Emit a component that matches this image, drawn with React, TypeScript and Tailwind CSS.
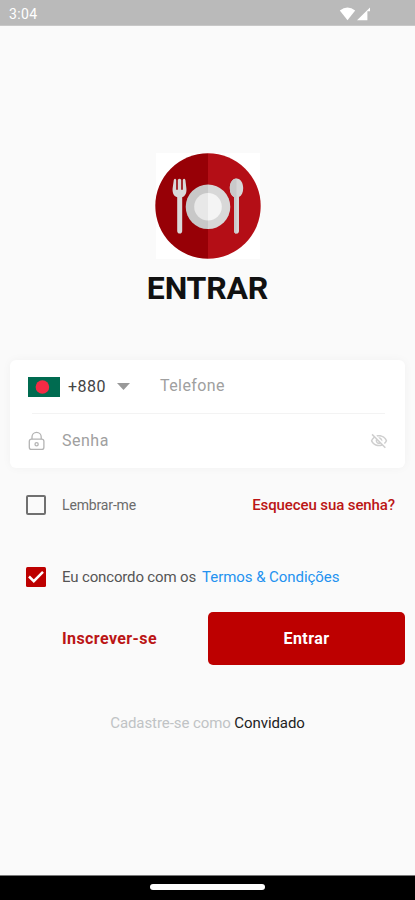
import React from "react";

const App: React.FC = () => {
  return (
    <div className="flex h-[900px] w-[415px] flex-col overflow-hidden bg-[#fafafa] font-[Roboto,sans-serif]">
      <StatusBar />
      <main className="flex flex-1 flex-col pt-[127px]">
        <div className="flex flex-col items-center">
          <Logo />
          <h1 className="mt-[9px] text-[32px] leading-10 font-bold tracking-[-0.2px] text-[#111]">
            ENTRAR
          </h1>
        </div>
        <LoginFields />
        <div className="mt-[25px] flex h-6 items-center pr-5 pl-[26px]">
          <Checkbox />
          <span className="ml-4 text-sm tracking-[-0.15px] text-[#6b6b6b]">
            Lembrar-me
          </span>
          <a className="ml-auto text-[15px] font-medium tracking-[-0.1px] text-[#bb1515]">
            Esqueceu sua senha?
          </a>
        </div>
        <div className="mt-12 flex h-6 items-center pl-[26px]">
          <Checkbox checked />
          <span className="ml-4 text-[15px] tracking-[-0.15px] text-[#555]">
            Eu concordo com os
          </span>
          <a className="ml-1.5 text-[15px] tracking-[-0.05px] text-[#2492f0]">
            Termos &amp; Condições
          </a>
        </div>
        <div className="mt-[23px] flex h-[53px] pr-2.5">
          <button className="w-[208px] pt-px pl-[11px] text-base font-bold tracking-[0.4px] text-[#bb1515]">
            Inscrever-se
          </button>
          <button className="flex-1 rounded-[5px] bg-[#bd0000] pt-px text-base font-bold tracking-[0.4px] text-white">
            Entrar
          </button>
        </div>
        <p className="mt-[47px] text-center text-[15px] leading-[22px] tracking-[-0.08px] text-[#c0c3c5]">
          Cadastre-se como <span className="text-[#222]">Convidado</span>
        </p>
      </main>
      <div className="flex h-[25px] justify-center border-t border-[#777] bg-black pt-[8px]">
        <div className="h-[6px] w-[115px] rounded-full bg-white" />
      </div>
    </div>
  );
};

export default App;

const StatusBar: React.FC = () => {
  return (
    <div className="flex h-[26px] items-center border-b border-[#c8c8c8] bg-[#bababa] pt-[2px] pr-[44px] pl-[9px] text-white">
      <span className="text-sm tracking-[0.4px]">3:04</span>
      <svg className="ml-auto h-[14px] w-[32px]" viewBox="0 0 32 14" fill="currentColor">
        <path d="M.8 3.5Q8.5-2.5 16.2 3.5L8.5 13.2Z" />
        <path d="M18 13.2 31 .5v3.8h-2.6v8.9Z" />
      </svg>
    </div>
  );
};

const Logo: React.FC = () => {
  return (
    <svg className="h-[106px] w-[106px]" viewBox="0 0 106 106">
      <path d="M1 0h104v106H1z" fill="#fff" />
      <path d="M53 .3a52.7 52.7 0 0 0 0 105.4Z" fill="#970006" />
      <path d="M53 .3a52.7 52.7 0 0 1 0 105.4Z" fill="#b40e16" />
      {/* fork */}
      <path
        d="M18.8 27q1.3-2.3 2.4 0v9.5q.8.8 1.6 0V26.8q1.7-2.3 3.4 0v9.7q.8.8 1.6 0V27q1.3-2.3 2.6 0l1 8.5c.5 5-1.4 7.7-4.2 8.8v33.5q0 2.8-2.5 2.8t-2.5-2.8V44.300c-3-1-5-3.800-4.600-8.800Z"
        fill="#d9d9d9"
      />
      {/* plate */}
      <path d="M53 31.500a22.300 22.300 0 0 0 0 44.600Z" fill="#c8c8c8" />
      <path d="M53 31.500a22.300 22.300 0 0 1 0 44.600Z" fill="#d8d8d8" />
      <path d="M53 40a13.800 13.800 0 0 0 0 27.600Z" fill="#e8e8e8" />
      <path d="M53 40a13.800 13.800 0 0 1 0 27.600Z" fill="#f4f4f4" />
      {/* spoon */}
      <path
        d="M81.500 25.500c4.200 0 6.700 4.500 6.700 9.500 0 4.800-1.600 7.800-4.200 9v33.800q0 2.800-2.500 2.800t-2.500-2.800V44c-2.600-1.200-4.200-4.200-4.200-9 0-5 2.500-9.500 6.700-9.500Z"
        fill="#d7d7d7"
      />
      <path
        d="M81.500 25.500c-4.200 0-6.700 4.500-6.700 9.500 0 4.800 1.600 7.800 4.200 9v33.800q0 2.800 2.500 2.800Z"
        fill="#c9c9c9"
      />
    </svg>
  );
};

const LoginFields: React.FC = () => {
  return (
    <div className="mx-2.5 mt-[52px] h-[108px] rounded-md bg-white shadow-[0_0_10px_rgba(0,0,0,0.04)]">
      <div className="mx-[18px] flex h-[53px] items-center">
        <svg className="h-5 w-8" viewBox="0 0 32 20">
          <path d="M0 0h32v20H0z" fill="#006b50" />
          <circle cx="14.4" cy="10" r="6.8" fill="#f42b45" />
        </svg>
        <span className="ml-2 text-base tracking-[0.5px] text-[#444]">
          +880
        </span>
        <svg className="ml-[11px] h-[7px] w-[13px]" viewBox="0 0 13 7">
          <path d="M0 0h13L6.5 7Z" fill="#999" />
        </svg>
        <span className="ml-[30px] pb-0.5 text-base tracking-[0.4px] text-[#a0a0a0]">
          Telefone
        </span>
      </div>
      <div className="mr-5 ml-[22px] h-px bg-[#f3f3f3]" />
      <div className="mr-4 ml-[18px] flex h-[53px] items-center">
        <LockIcon />
        <span className="ml-4 text-base tracking-[0.5px] text-[#a0a0a0]">
          Senha
        </span>
        <EyeOffIcon />
      </div>
    </div>
  );
};

const Checkbox: React.FC<{ checked?: boolean }> = ({ checked }) => {
  if (!checked) {
    return (
      <div className="h-5 w-5 rounded-[2px] border-2 border-[#707070]" />
    );
  }

  return (
    <svg className="h-5 w-5" viewBox="0 0 20 20" fill="none">
      <rect width="20" height="20" rx="1.5" fill="#bd0000" />
      <path d="m3 9.5 4.8 4.7 9.2-9.4" stroke="#fff" strokeWidth="2.5" />
    </svg>
  );
};

const LockIcon: React.FC = () => {
  return (
    <svg
      className="h-5 w-[18px]"
      viewBox="0 0 18 20"
      fill="none"
      stroke="#b4b4b4"
      strokeWidth="1.3"
    >
      <path d="M4 8.2V6a4.600 4.600 0 0 1 9.200 0v2.200" />
      <path d="M3.500 8.200h10.200q2 0 2.200 2v6q0 2.200-2.200 2.200H3.500q-2.200 0-2.200-2.200v-6q.2-2 2.200-2Z" />
      <circle cx="8.600" cy="13.200" r="1.600" />
    </svg>
  );
};

const EyeOffIcon: React.FC = () => {
  return (
    <svg
      className="mr-px ml-auto h-[18px] w-[18px]"
      viewBox="0 0 24 24"
      fill="#cfcfcf"
    >
      <path d="M12 6a9.77 9.77 0 0 1 8.82 5.5 9.65 9.65 0 0 1-2.41 3.12l1.41 1.41c1.39-1.23 2.49-2.77 3.18-4.53C21.27 7.11 17 4 12 4c-1.27 0-2.49.2-3.64.57l1.65 1.65C10.66 6.09 11.32 6 12 6zm-1.07 1.14L13 9.21c.57.25 1.03.71 1.28 1.28l2.07 2.07c.08-.34.14-.7.14-1.07C16.5 9.01 14.48 7 12 7c-.37 0-.72.05-1.07.14zM2.01 3.87l2.68 2.68A11.738 11.738 0 0 0 1 11.5C2.73 15.89 7 19 12 19c1.52 0 2.98-.29 4.32-.82l3.42 3.42 1.41-1.41L3.42 2.45 2.01 3.87zm7.5 7.5 2.61 2.61c-.04.01-.08.02-.12.02a2.5 2.5 0 0 1-2.5-2.5c0-.05.01-.08.01-.13zm-3.4-3.4 1.75 1.75a4.6 4.6 0 0 0-.36 1.78 4.507 4.507 0 0 0 6.27 4.14l.98.98c-.88.24-1.8.38-2.75.38a9.77 9.77 0 0 1-8.82-5.5c.7-1.43 1.72-2.61 2.93-3.53z" />
    </svg>
  );
};
